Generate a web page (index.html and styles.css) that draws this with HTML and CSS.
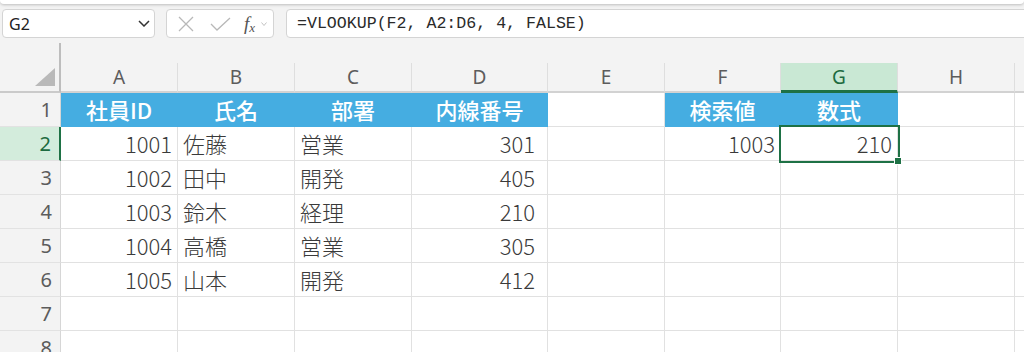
FILE: index.html
```html
<!DOCTYPE html>
<html>
<head>
    <title>VLOOKUP - Book1</title>
    <link rel="stylesheet" href="styles.css">
</head>
<body>

    <div class="ribbon-edge"></div>

    <div class="formula-bar">
        <div class="name-box">
            <span>G2</span>
            <svg width="12" height="7" viewBox="0 0 12 7"><path d="M1 1l5 5 5-5" fill="none" stroke="#333" stroke-width="1.5"/></svg>
        </div>
        <div class="fx-box">
            <svg width="16" height="16" viewBox="0 0 16 16"><path d="M1 1l14 14M15 1L1 15" fill="none" stroke="#b8b8b8" stroke-width="1.3"/></svg>
            <svg width="21" height="14" viewBox="0 0 21 14"><path d="M1 7l6 6L20 1" fill="none" stroke="#b8b8b8" stroke-width="1.3"/></svg>
            <span class="fx">f<sub>x</sub></span>
            <svg width="6" height="4" viewBox="0 0 6 4"><path d="M0.5 0.5l2.5 3 2.5-3" fill="none" stroke="#bbb" stroke-width="0.9"/></svg>
        </div>
        <div class="formula-input">=VLOOKUP(F2, A2:D6, 4, FALSE)</div>
    </div>

    <div class="sheet">
        <div class="corner">
            <svg width="20" height="18" viewBox="0 0 20 18"><path d="M20 0V18H0Z" fill="#b9b9b9"/></svg>
        </div>
        <div class="gap"></div>

        <div class="col-head">A</div>
        <div class="col-head">B</div>
        <div class="col-head">C</div>
        <div class="col-head">D</div>
        <div class="col-head">E</div>
        <div class="col-head">F</div>
        <div class="col-head active">G</div>
        <div class="col-head">H</div>
        <div class="col-head"></div>

        <div class="row-head">1</div>
        <div class="cell hd">社員ID</div>
        <div class="cell hd">氏名</div>
        <div class="cell hd">部署</div>
        <div class="cell hd">内線番号</div>
        <div class="cell"></div>
        <div class="cell hd">検索値</div>
        <div class="cell hd">数式</div>
        <div class="cell"></div>
        <div class="cell"></div>

        <div class="row-head active">2</div>
        <div class="cell num">1001</div>
        <div class="cell">佐藤</div>
        <div class="cell">営業</div>
        <div class="cell num ext">301</div>
        <div class="cell"></div>
        <div class="cell num">1003</div>
        <div class="cell num selected">210</div>
        <div class="cell"></div>
        <div class="cell"></div>

        <div class="row-head">3</div>
        <div class="cell num">1002</div>
        <div class="cell">田中</div>
        <div class="cell">開発</div>
        <div class="cell num ext">405</div>
        <div class="cell"></div>
        <div class="cell"></div>
        <div class="cell"></div>
        <div class="cell"></div>
        <div class="cell"></div>

        <div class="row-head">4</div>
        <div class="cell num">1003</div>
        <div class="cell">鈴木</div>
        <div class="cell">経理</div>
        <div class="cell num ext">210</div>
        <div class="cell"></div>
        <div class="cell"></div>
        <div class="cell"></div>
        <div class="cell"></div>
        <div class="cell"></div>

        <div class="row-head">5</div>
        <div class="cell num">1004</div>
        <div class="cell">高橋</div>
        <div class="cell">営業</div>
        <div class="cell num ext">305</div>
        <div class="cell"></div>
        <div class="cell"></div>
        <div class="cell"></div>
        <div class="cell"></div>
        <div class="cell"></div>

        <div class="row-head">6</div>
        <div class="cell num">1005</div>
        <div class="cell">山本</div>
        <div class="cell">開発</div>
        <div class="cell num ext">412</div>
        <div class="cell"></div>
        <div class="cell"></div>
        <div class="cell"></div>
        <div class="cell"></div>
        <div class="cell"></div>

        <div class="row-head">7</div>
        <div class="cell"></div>
        <div class="cell"></div>
        <div class="cell"></div>
        <div class="cell"></div>
        <div class="cell"></div>
        <div class="cell"></div>
        <div class="cell"></div>
        <div class="cell"></div>
        <div class="cell"></div>

        <div class="row-head">8</div>
        <div class="cell"></div>
        <div class="cell"></div>
        <div class="cell"></div>
        <div class="cell"></div>
        <div class="cell"></div>
        <div class="cell"></div>
        <div class="cell"></div>
        <div class="cell"></div>
        <div class="cell"></div>
    </div>

</body>
</html>
```

FILE: styles.css
```css
body {
    margin: 0;
    background: #f3f3f3;
    font-family: "Noto Sans", "Noto Sans CJK JP", sans-serif;
    overflow: hidden;
}

.ribbon-edge {
    height: 4px;
    background: white;
    border-radius: 0 0 6px 6px;
    box-shadow: 0 1px 3px rgba(0, 0, 0, 0.22);
}

/* formula bar */
.formula-bar {
    display: flex;
    padding: 5px 0 0 2px;
    height: 29px;
}

.name-box, .fx-box, .formula-input {
    box-sizing: border-box;
    height: 29px;
    background: white;
    border: 1px solid #d4d4d4;
    border-radius: 4px;
    display: flex;
    align-items: center;
}

.name-box {
    width: 153px;
    padding: 0 4px 0 6px;
    justify-content: space-between;
    font-size: 16px;
    color: #222;
}

.fx-box {
    width: 108px;
    margin-left: 11px;
    padding-left: 11px;
}

.fx-box svg:nth-child(2) {
    margin-left: 16px;
}

.fx {
    margin-left: 13px;
    font-family: "Liberation Serif", serif;
    font-style: italic;
    font-size: 19px;
    color: #555;
    line-height: 1;
}

.fx sub {
    font-size: 13px;
    vertical-align: -2px;
}

.fx-box svg:last-child {
    margin-left: 6px;
}

.formula-input {
    flex: 1;
    margin-left: 12px;
    margin-right: -10px;
    padding-left: 10px;
    font-family: "Liberation Mono", monospace;
    font-size: 16.6px;
    color: #2a2a2a;
}

/* sheet grid */
.sheet {
    margin-top: 5px;
    display: grid;
    grid-template-columns: 61px 117px 117px 117px 136px 117px 116px 117px 117px 1fr;
    grid-template-rows: 20px 30px;
    grid-auto-rows: 34px;
}

.corner {
    grid-row: span 2;
    border-right: 2px solid #bdbdbd;
    border-bottom: 2px solid #cacaca;
    display: flex;
    align-items: flex-end;
    justify-content: flex-end;
    padding: 0 4px 5px 0;
}

.gap {
    grid-column: 2 / -1;
}

.col-head {
    border-right: 1px solid #dedede;
    border-bottom: 2px solid #d2d2d2;
    color: #5c5c5c;
    font-size: 19px;
    text-align: center;
    line-height: 28px;
}

.col-head.active {
    background: #c9e8d4;
    color: #1d6b40;
    border-bottom: 3px solid #1e7145;
}

.row-head {
    border-right: 1px solid #d6d6d6;
    border-bottom: 1px solid #e2e2e2;
    color: #5c5c5c;
    font-size: 20px;
    text-align: right;
    padding-right: 8px;
    line-height: 33px;
}

.row-head.active {
    background: #d3ecdc;
    color: #1d6b40;
    border-right: 2px solid #1e7145;
}

.cell {
    background: white;
    border-right: 1px solid #e1e1e1;
    border-bottom: 1px solid #e1e1e1;
    font-family: "Noto Sans CJK JP", sans-serif;
    font-weight: 300;
    font-size: 22px;
    color: #3a3a3a;
    line-height: 33px;
    padding: 0 5px;
    white-space: nowrap;
}

.cell.num {
    text-align: right;
}

.cell.ext {
    padding-right: 12px;
}

.cell.hd {
    background: #45ade1;
    border-color: #45ade1;
    color: white;
    font-weight: 500;
    text-align: center;
}

.cell.selected {
    position: relative;
    outline: 2px solid #1e7145;
}

.cell.selected::after {
    content: "";
    position: absolute;
    right: -5px;
    bottom: -5px;
    width: 6px;
    height: 6px;
    background: #1e7145;
    border: 1px solid white;
}
```
